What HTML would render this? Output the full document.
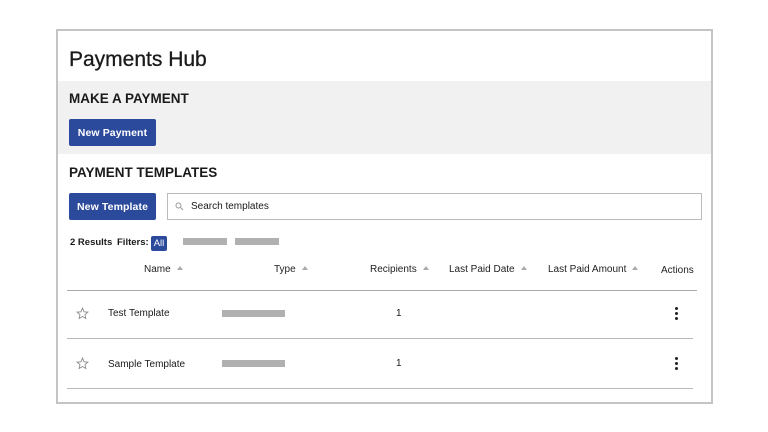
<!DOCTYPE html>
<html><head><style>
*{margin:0;padding:0;box-sizing:border-box}
body{width:768px;height:432px;background:#fff;font-family:"Liberation Sans",sans-serif;color:#1a1a1a;position:relative;overflow:hidden}
.a{position:absolute;white-space:nowrap}
.btn{position:absolute;background:#2b4a9b;color:#fff;font-size:10.5px;font-weight:bold;display:flex;align-items:center;justify-content:center;border-radius:2px;letter-spacing:0.1px}
.h{font-size:10px;color:#222}
.tri{display:inline-block;width:0;height:0;border-left:3px solid transparent;border-right:3px solid transparent;border-bottom:4px solid #aaa;margin-left:6px;vertical-align:2px}
.bar{position:absolute;background:#b0b0b0;height:7px}
.line{position:absolute;height:1px;background:#bbb}
.dots{position:absolute;width:3px}
.dots i{display:block;width:3px;height:3px;border-radius:50%;background:#222;margin-bottom:2px}
</style></head><body>
<div class="a" style="left:56px;top:29px;width:657px;height:375px;border:2px solid #c4c4c4"></div>
<div class="a" style="left:58px;top:81px;width:653px;height:73px;background:#f1f1f1"></div>
<div class="a" style="left:69px;top:48px;font-size:21px;-webkit-text-stroke:0.3px #1a1a1a">Payments Hub</div>
<div class="a" style="left:69px;top:91px;font-size:13.5px;font-weight:bold">MAKE A PAYMENT</div>
<div class="btn" style="left:69px;top:119px;width:87px;height:27px">New Payment</div>
<div class="a" style="left:69px;top:165px;font-size:13.5px;font-weight:bold">PAYMENT TEMPLATES</div>
<div class="btn" style="left:69px;top:193px;width:87px;height:27px">New Template</div>
<div class="a" style="left:167px;top:193px;width:535px;height:27px;border:1px solid #bbb;background:#fff"></div>
<svg class="a" style="left:175px;top:202px" width="9" height="9" viewBox="0 0 9 9"><circle cx="3.5" cy="3.5" r="2.5" fill="none" stroke="#999" stroke-width="1"/><path d="M5.3 5.3L8 8" stroke="#999" stroke-width="1"/></svg>
<div class="a" style="left:191px;top:201px;font-size:10px">Search templates</div>
<div class="a" style="left:70px;top:237px;font-size:9.5px;font-weight:bold">2 Results</div>
<div class="a" style="left:117px;top:237px;font-size:9.5px;font-weight:bold">Filters:</div>
<div class="a" style="left:151px;top:236px;width:16px;height:15px;background:#2b4a9b;color:#fff;font-size:9.5px;text-align:center;line-height:15px;border-radius:2px">All</div>
<div class="bar" style="left:183px;top:238px;width:44px"></div>
<div class="bar" style="left:235px;top:238px;width:44px"></div>
<div class="a h" style="left:144px;top:264px">Name<span class="tri"></span></div>
<div class="a h" style="left:274px;top:264px">Type<span class="tri"></span></div>
<div class="a h" style="left:370px;top:264px">Recipients<span class="tri"></span></div>
<div class="a h" style="left:449px;top:264px">Last Paid Date<span class="tri"></span></div>
<div class="a h" style="left:548px;top:264px">Last Paid Amount<span class="tri"></span></div>
<div class="a h" style="left:661px;top:265px">Actions</div>
<div class="line" style="left:67px;top:290px;width:630px;background:#aaa"></div>
<svg class="a" style="left:76px;top:307px" width="13" height="13" viewBox="0 0 24 24"><path d="M12 2l2.9 6.9 7.1.6-5.4 4.7 1.6 7.1L12 17.6 5.8 21.3l1.6-7.1L2 9.5l7.1-.6z" fill="none" stroke="#888" stroke-width="1.6"/></svg>
<div class="a" style="left:108px;top:308px;font-size:10px">Test Template</div>
<div class="bar" style="left:222px;top:310px;width:63px"></div>
<div class="a" style="left:396px;top:308px;font-size:10px">1</div>
<div class="dots" style="left:675px;top:307px"><i></i><i></i><i></i></div>
<div class="line" style="left:67px;top:338px;width:626px"></div>
<svg class="a" style="left:76px;top:357px" width="13" height="13" viewBox="0 0 24 24"><path d="M12 2l2.9 6.9 7.1.6-5.4 4.7 1.6 7.1L12 17.6 5.8 21.3l1.6-7.1L2 9.5l7.1-.6z" fill="none" stroke="#888" stroke-width="1.6"/></svg>
<div class="a" style="left:108px;top:359px;font-size:10px">Sample Template</div>
<div class="bar" style="left:222px;top:360px;width:63px"></div>
<div class="a" style="left:396px;top:358px;font-size:10px">1</div>
<div class="dots" style="left:675px;top:357px"><i></i><i></i><i></i></div>
<div class="line" style="left:67px;top:388px;width:626px"></div>
</body></html>
